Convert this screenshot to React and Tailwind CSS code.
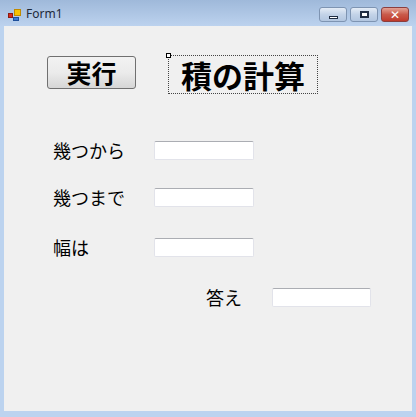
import React from "react";

const jp = { fontFamily: '"Noto Sans CJK JP", "Noto Sans", sans-serif' };

function TextBox({ w = "w-[100px]" }) {
  return (
    <div
      className={`${w} h-[19px] bg-white border border-[#e2e3ea] border-t-[#abadb3] rounded-[2px]`}
    />
  );
}

function CaptionBtn({ children, close }) {
  return (
    <div
      className={`w-[28px] h-[15px] rounded-[3px] border flex items-center justify-center ${
        close
          ? "border-[#8b3e3e] bg-gradient-to-b from-[#e2a194] via-[#c95a4a] to-[#c0392b]"
          : "border-[#7e94b2] bg-gradient-to-b from-[#e4ecf6] via-[#c3d3e8] to-[#b2c6e0]"
      }`}
    >
      {children}
    </div>
  );
}

export default function App() {
  return (
    <div className="w-[416px] h-[417px] bg-[#bcd3ef] flex flex-col overflow-hidden">
      {/* title bar */}
      <div className="h-[26px] flex items-start bg-gradient-to-b from-[#9fb9da] to-[#bcd2ee]">
        <div className="mt-[9px] ml-[8px] w-[13px] h-[13px] relative">
          <div className="absolute left-[6px] top-0 w-[7px] h-[7px] bg-[#f6c200] border border-[#c08a00]" />
          <div className="absolute left-0 top-[4px] w-[5px] h-[5px] bg-[#d92a1c] border border-[#8a1a10]" />
          <div className="absolute left-[5px] top-[8px] w-[6px] h-[4px] bg-[#3a7bd5] border border-[#1d4e9a]" />
        </div>
        <div
          className="ml-[5px] mt-[7px] text-[12px] leading-[14px] text-[#1e2a3a]"
          style={{ fontFamily: '"Noto Sans", "Open Sans", sans-serif' }}
        >
          Form1
        </div>
        <div className="ml-auto mr-[7px] mt-[7px] flex gap-[3px]">
          <CaptionBtn>
            <div className="w-[9px] h-[3px] border border-[#1f2d44] bg-white mt-[5px]" />
          </CaptionBtn>
          <CaptionBtn>
            <div className="w-[9px] h-[7px] border-[2px] border-[#1f2d44] bg-white" />
          </CaptionBtn>
          <CaptionBtn close>
            <span
              className="text-white text-[12px] leading-[12px] font-bold"
              style={{ fontFamily: '"DejaVu Sans", sans-serif' }}
            >
              ✕
            </span>
          </CaptionBtn>
        </div>
      </div>

      {/* client area */}
      <div
        className="mx-[4px] h-[385px] bg-[#f0f0f0] flex flex-col text-black"
        style={jp}
      >
        <div className="flex items-start pt-[29px] pl-[43px]">
          <div className="mt-[1px] w-[89px] h-[33px] rounded-[3px] border border-[#707070] bg-gradient-to-b from-[#f2f2f2] via-[#ebebeb] to-[#d6d6d6] flex items-center justify-center">
            <span className="text-[25px] leading-[25px] font-bold">実行</span>
          </div>
          <div className="relative ml-[32px] w-[150px] h-[39px] border border-dotted border-[#444] flex items-center justify-center">
            <div className="absolute -left-[3px] -top-[3px] w-[5px] h-[5px] bg-white border border-black" />
            <span className="text-[31px] leading-[31px] font-bold">積の計算</span>
          </div>
        </div>

        <div className="flex items-center mt-[46px] pl-[49px]">
          <span className="w-[101px] text-[18px] leading-[20px]">幾つから</span>
          <TextBox />
        </div>
        <div className="flex items-center mt-[27px] pl-[49px]">
          <span className="w-[101px] text-[18px] leading-[20px]">幾つまで</span>
          <TextBox />
        </div>
        <div className="flex items-center mt-[30px] pl-[49px]">
          <span className="w-[101px] text-[18px] leading-[20px]">幅は</span>
          <TextBox />
        </div>
        <div className="flex items-center mt-[30px] pl-[202px]">
          <span className="w-[66px] text-[18px] leading-[20px]">答え</span>
          <TextBox w="w-[99px]" />
        </div>
      </div>
    </div>
  );
}
